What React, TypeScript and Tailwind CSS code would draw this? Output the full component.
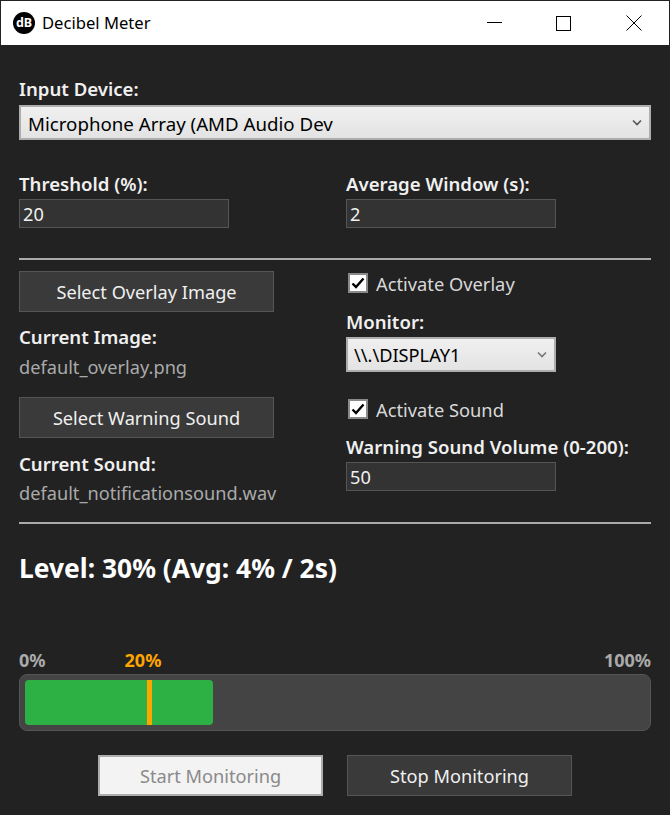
import React from 'react';

const label = 'text-[18.6px] leading-6 font-semibold text-[#f0f0f0]';

const Chevron = ({ className, color }: { className: string; color: string }) => (
  <svg className={className} width="10" height="7" viewBox="0 0 10 7" fill="none">
    <path d="M1 1.5 L5 5.5 L9 1.5" stroke={color} strokeWidth="1.6" />
  </svg>
);

const Check = ({ label }: { label: string }) => (
  <div className="flex items-center h-6 ml-[2px] gap-2">
    <div className="w-5 h-5 bg-white border-2 border-[#8a8a8a] flex items-center justify-center">
      <svg width="14" height="12" viewBox="0 0 14 12" fill="none">
        <path d="M1.5 6.5 L5 10 L12.5 1.5" stroke="#000" strokeWidth="2.4" />
      </svg>
    </div>
    <span className="pt-[2px] text-[18.3px] text-[#d8d8d8]">{label}</span>
  </div>
);

const Field = ({ value }: { value: string }) => (
  <input
    readOnly
    value={value}
    className="block mt-[3px] w-[210px] h-[29px] bg-[#333333] border border-[#555555] px-[3px] text-[18.2px] text-[#f0f0f0] outline-none"
  />
);

const DarkButton = ({ text, className }: { text: string; className: string }) => (
  <button className={`h-[41px] pt-[3px] bg-[#3a3a3a] border border-[#555555] text-[18.2px] text-[#f0f0f0] ${className}`}>{text}</button>
);

export default function App() {
  return (
    <div className="w-[670px] h-[815px] flex flex-col bg-[#222222] border border-[#222222] font-['Noto_Sans',sans-serif] overflow-hidden">
      <header className="h-[44px] shrink-0 bg-white flex items-center">
        <div className="ml-[12px] w-[22px] h-[22px] rounded-full bg-black flex items-center justify-center">
          <span className="text-[12.5px] leading-none font-bold text-white">dB</span>
        </div>
        <span className="ml-[7px] text-[16.6px] text-black">Decibel Meter</span>
        <div className="ml-auto flex items-center">
          <svg width="16" height="2" viewBox="0 0 16 2" className="mr-[53px]">
            <rect width="15" height="1" fill="#000" />
          </svg>
          <div className="w-[15px] h-[15px] border border-black mr-[55px]" />
          <svg width="16" height="16" viewBox="0 0 16 16" className="mr-[27px]">
            <path d="M0.5 0.5 L15.5 15.5 M15.5 0.5 L0.5 15.5" stroke="#000" strokeWidth="1" />
          </svg>
        </div>
      </header>

      <main className="flex-1 px-[18px] pt-[32px]">
        <div className={label}>Input Device:</div>
        <div className="mt-[4px] h-[35px] border-2 border-[#adadad] bg-gradient-to-b from-[#f0f0f0] to-[#e3e3e3] flex items-center px-[7px] text-[18.7px] text-black">
          <span className="pt-[3px]">Microphone Array (AMD Audio Dev</span>
          <Chevron className="ml-auto" color="#555" />
        </div>

        <div className="mt-[32px] grid grid-cols-[327px_1fr]">
          <div>
            <div className={label}>Threshold (%):</div>
            <Field value="20" />
          </div>
          <div>
            <div className={label}>Average Window (s):</div>
            <Field value="2" />
          </div>
        </div>

        <div className="mt-[30px] h-[2px] bg-[#aaaaaa]" />

        <div className="mt-[11px] grid grid-cols-[327px_1fr]">
          <div>
            <DarkButton text="Select Overlay Image" className="w-[255px] block" />
            <div className={`mt-[13px] ${label}`}>Current Image:</div>
            <div className="mt-[6px] leading-6 text-[18.2px] text-[#aaaaaa]">default_overlay.png</div>
            <DarkButton text="Select Warning Sound" className="w-[255px] block mt-[18px]" />
            <div className={`mt-[14px] ${label}`}>Current Sound:</div>
            <div className="mt-[5px] leading-6 text-[18.2px] text-[#aaaaaa]">default_notificationsound.wav</div>
          </div>
          <div>
            <Check label="Activate Overlay" />
            <div className={`mt-[15px] ${label}`}>Monitor:</div>
            <div className="mt-[3px] w-[210px] h-[35px] border-2 border-[#adadad] bg-gradient-to-b from-[#f0f0f0] to-[#e3e3e3] flex items-center px-[6px] text-[18.2px] text-black">
              <span className="pt-[2px]">\\.\DISPLAY1</span>
              <Chevron className="ml-auto mr-[1px]" color="#777" />
            </div>
            <div className="mt-[25px]">
              <Check label="Activate Sound" />
            </div>
            <div className={`mt-[14px] ${label}`}>Warning Sound Volume (0-200):</div>
            <Field value="50" />
          </div>
        </div>

        <div className="mt-[17px] h-[2px] bg-[#aaaaaa]" />

        <div className="mt-[28px] text-[26.4px] leading-8 font-bold text-white">Level: 30% (Avg: 4% / 2s)</div>

        <div className="mt-[64px] flex items-center h-6 text-[18px] font-bold text-[#aaaaaa]">
          <span>0%</span>
          <span className="ml-[79px] text-[#ffa500]">20%</span>
          <span className="ml-auto">100%</span>
        </div>
        <div className="relative mt-[2px] h-[57px] rounded-lg bg-[#444444] border border-[#555555] p-[5px]">
          <div className="w-[188px] h-full rounded bg-[#2db145]" />
          <div className="absolute left-[127px] top-[5px] bottom-[5px] w-[5px] bg-[#ffa500]" />
        </div>

        <div className="mt-[24px] flex justify-center gap-[24px]">
          <button className="w-[225px] h-[41px] pt-[3px] bg-[#f3f3f3] border-2 border-[#adadad] text-[18.2px] text-[#8a8a8a]">Start Monitoring</button>
          <DarkButton text="Stop Monitoring" className="w-[225px]" />
        </div>
      </main>
    </div>
  );
}
